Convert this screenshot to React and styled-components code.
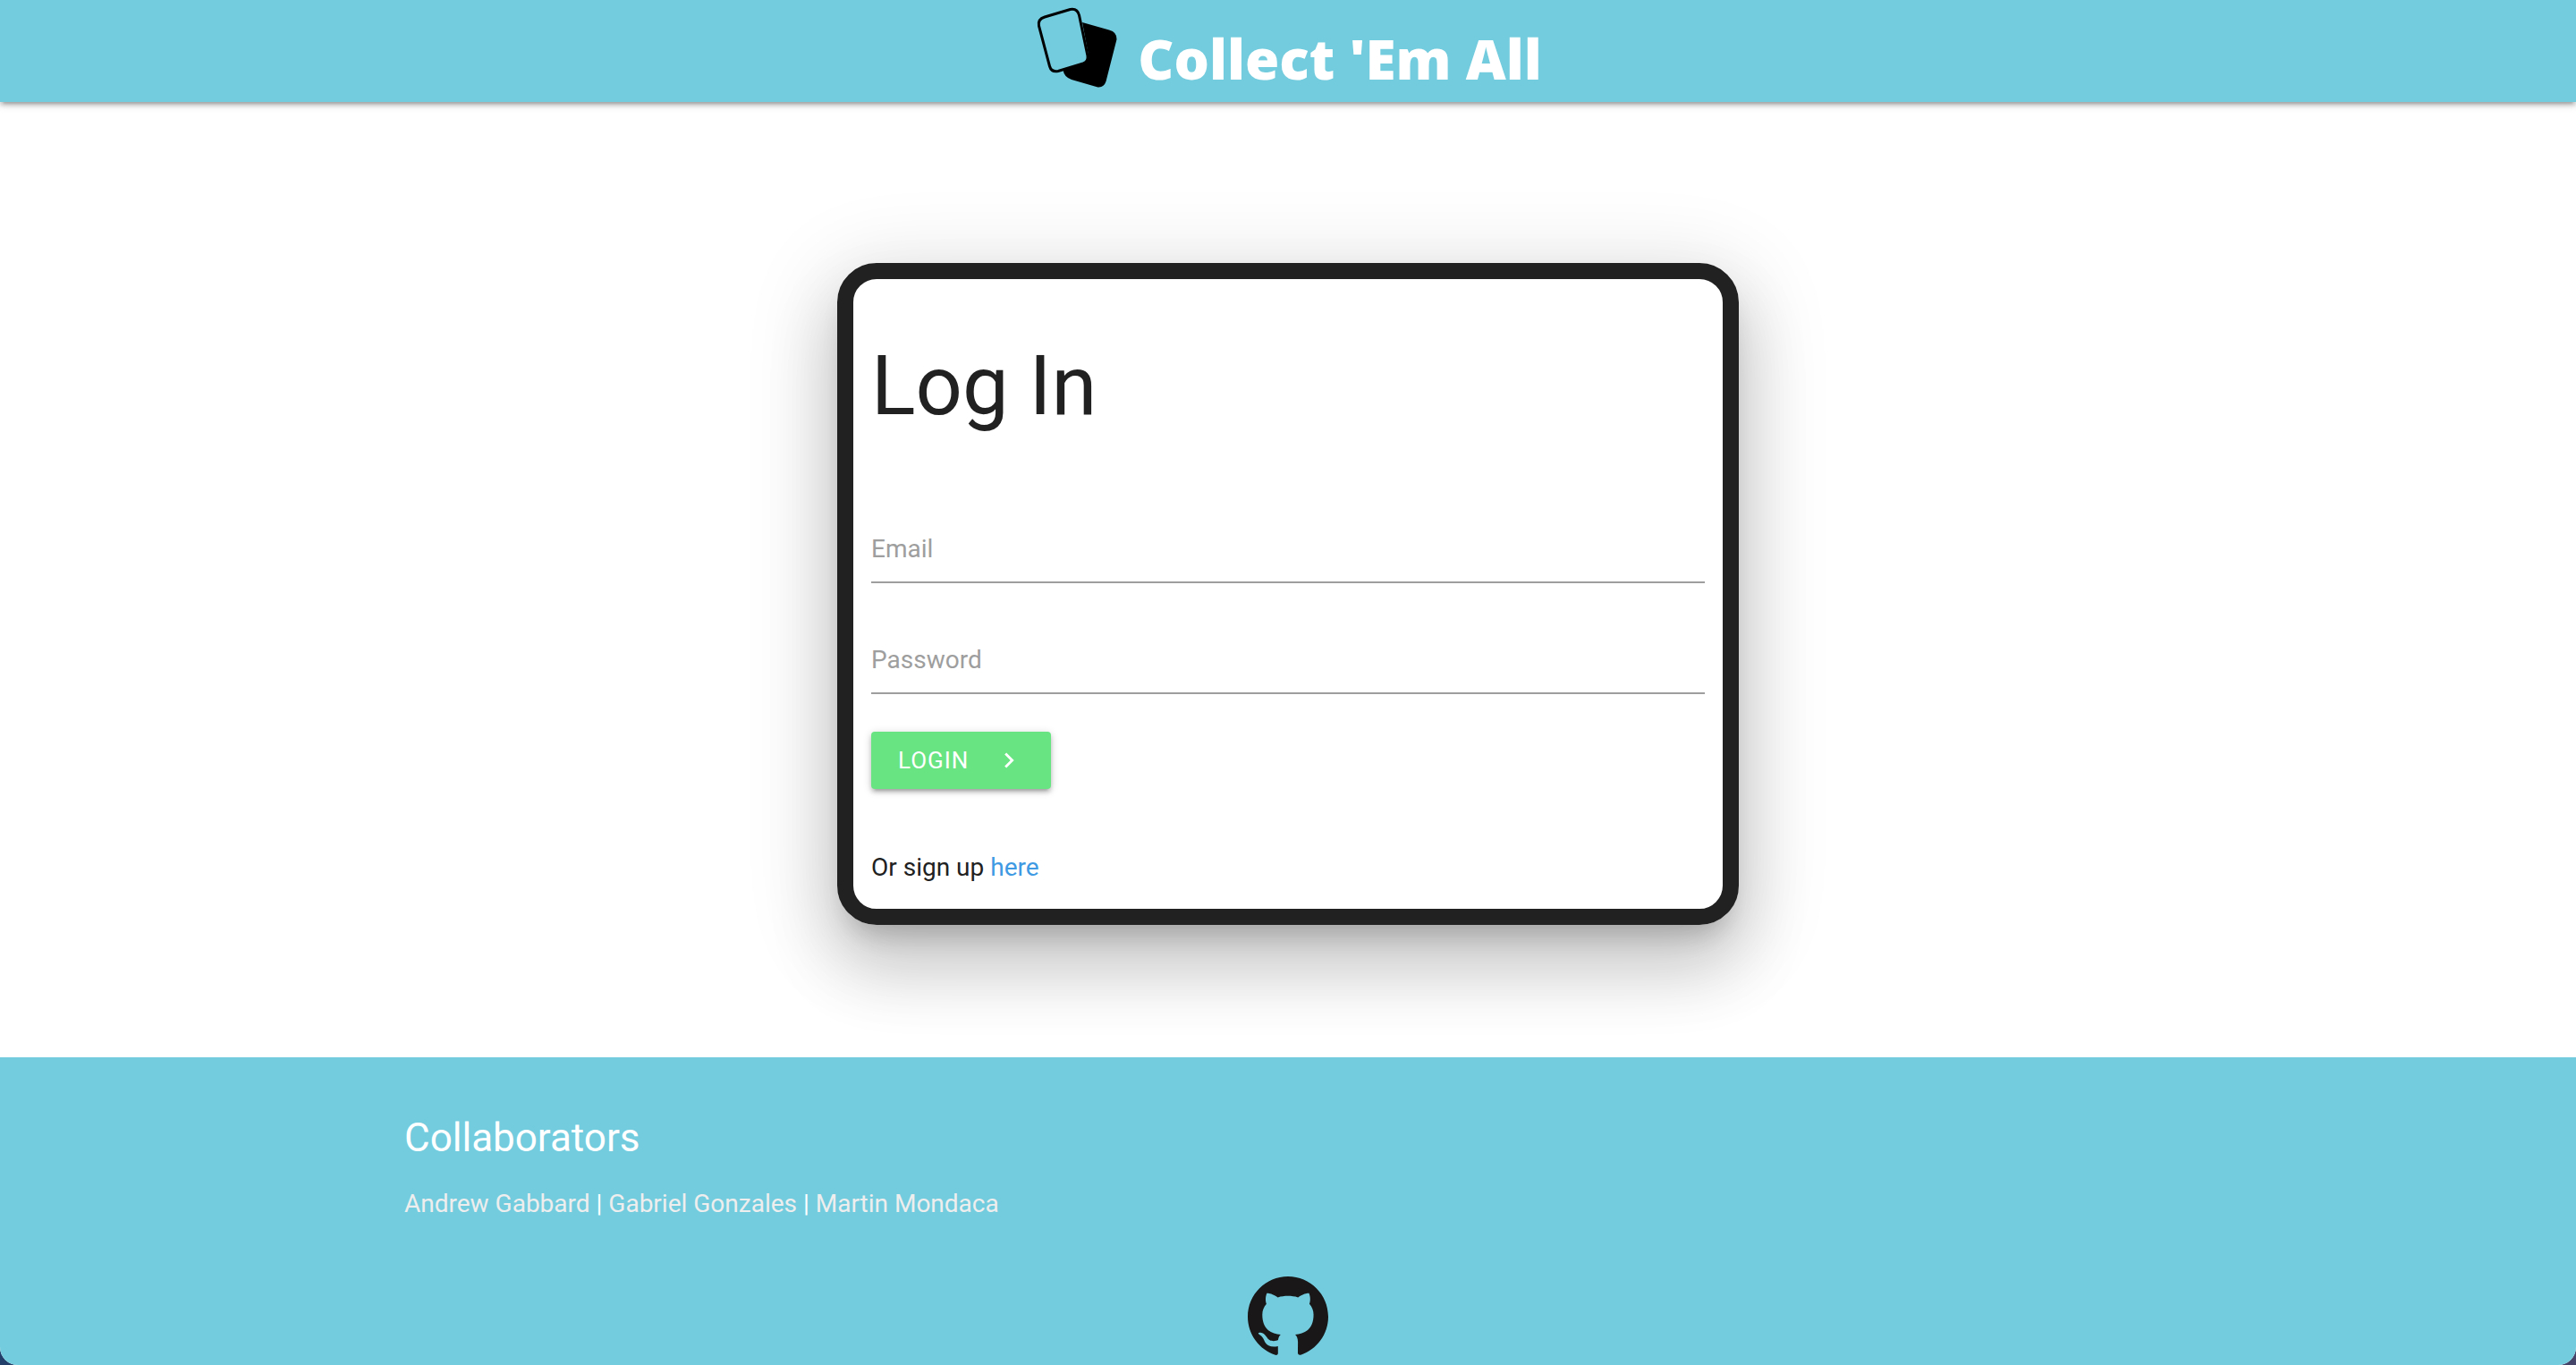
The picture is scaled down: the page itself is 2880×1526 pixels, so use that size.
import React from "react";
import styled, { createGlobalStyle } from "styled-components";

const sans = `Roboto, "Liberation Sans", sans-serif`;
const aqua = "#73ccde";
const ink = "#212121";
const raised = `0 4px 4px 0 rgba(0, 0, 0, 0.14), 0 6px 2px -4px rgba(0, 0, 0, 0.12),
  0 2px 10px 0 rgba(0, 0, 0, 0.2)`;

const GlobalStyle = createGlobalStyle`
  *, *::before, *::after { box-sizing: border-box; }
  body {
    margin: 0;
    background: linear-gradient(90deg, #223f6a, #454469);
    color: ${ink};
    font-family: ${sans};
    font-size: 28px;
    line-height: 44px;
  }
`;

const Page = styled.div`
  display: flex;
  flex-direction: column;
  min-height: 100vh;
  overflow: hidden;
  border-radius: 0 0 20px 20px;
  background: #fff;
`;

const Header = styled.header`
  display: flex;
  justify-content: center;
  align-items: flex-start;
  gap: 20px;
  height: 114px;
  padding-top: 5px;
  background: ${aqua};
  box-shadow: ${raised};
`;

const Brand = styled.h1`
  margin: 0;
  padding-top: 20px;
  color: #fff;
  font-family: "Noto Sans", sans-serif;
  font-size: 62px;
  font-weight: 900;
  line-height: 80px;
`;

const Main = styled.main`
  flex: 1;
  display: flex;
  justify-content: center;
  align-items: flex-start;
  padding: 180px 0 148px;
`;

const Card = styled.section`
  width: 35%;
  padding: 0 20px 24px;
  border: 18px solid ${ink};
  border-radius: 44px;
  box-shadow: 0 48px 76px 6px rgba(0, 0, 0, 0.14), 0 18px 92px 16px rgba(0, 0, 0, 0.12),
    0 22px 30px -14px rgba(0, 0, 0, 0.2);
`;

const Title = styled.h2`
  margin: 0;
  padding: 64px 0 72px;
  font-size: 92px;
  font-weight: 400;
  line-height: 112px;
`;

const Form = styled.form`
  display: flex;
  flex-direction: column;
  align-items: flex-start;
  gap: 32px;
`;

const Field = styled.div`
  display: grid;
  width: 100%;
  > * { grid-area: 1 / 1; }
`;

const Label = styled.label`
  padding-top: 32px;
  color: #9e9e9e;
  pointer-events: none;
`;

const Input = styled.input`
  width: 100%;
  height: 92px;
  padding: 16px 0 0;
  border: 0;
  border-bottom: 2px solid #9e9e9e;
  background: transparent;
  color: ${ink};
  font: inherit;
  outline: 0;
`;

const Button = styled.button`
  display: flex;
  align-items: center;
  gap: 28px;
  height: 64px;
  margin-top: 10px;
  padding: 0 30px;
  border: 0;
  border-radius: 4px;
  background: #69e483;
  box-shadow: ${raised};
  color: #fff;
  font-family: ${sans};
  font-size: 26px;
  letter-spacing: 1px;
  cursor: pointer;
`;

const SignUp = styled.p`
  margin: 66px 0 0;
`;

const SignUpLink = styled.a`
  color: #3f9ae3;
  text-decoration: none;
`;

const Footer = styled.footer`
  display: flex;
  flex-direction: column;
  padding: 60px 0 10px;
  background: ${aqua};
  color: #fff;
`;

const Container = styled.div`
  width: 70%;
  margin: 0 auto;
  padding: 0 20px;
`;

const FooterTitle = styled.h3`
  margin: 0 0 22px;
  font-size: 44px;
  font-weight: 400;
  line-height: 60px;
`;

const People = styled.p`
  margin: 0;
`;

const Person = styled.a`
  color: #eee;
  text-decoration: none;
`;

const RepoLink = styled.a`
  align-self: center;
  display: flex;
  margin-top: 58px;
`;

function CardsLogo() {
  return (
    <svg width="96" height="96" viewBox="0 0 96 96" aria-hidden="true">
      <path d="M54 20L84 28.5Q93 31 92.5 39L80.5 86Q78 93.5 70.5 92.2L42 84Q33.500 81 32.500 73L56 66Q62 63 61 57Z" />
      <path
        d="M12 14L40.500 5.500Q48.500 4 50.500 12L60 57.500Q61 63.500 55 66L27 74.500Q19.500 76 17.500 69L5.500 24Q4 16.500 12 14Z"
        fill={aqua}
        stroke="#000"
        strokeWidth="3"
      />
    </svg>
  );
}

function Chevron() {
  return (
    <svg width="34" height="34" viewBox="0 0 24 24" fill="#fff" aria-hidden="true">
      <path d="M10 6L8.590 7.410 13.170 12l-4.580 4.590L10 18l6-6z" />
    </svg>
  );
}

function GithubMark() {
  return (
    <svg width="90" height="90" viewBox="0 0 24 24" fill="#191717" aria-hidden="true">
      <path d="M12 .297c-6.630 0-12 5.373-12 12 0 5.303 3.438 9.800 8.205 11.385.6.113.82-.258.82-.577 0-.285-.01-1.040-.015-2.040-3.338.724-4.042-1.610-4.042-1.610C4.422 18.070 3.633 17.700 3.633 17.700c-1.087-.744.084-.729.084-.729 1.205.084 1.838 1.236 1.838 1.236 1.070 1.835 2.809 1.305 3.495.998.108-.776.417-1.305.76-1.605-2.665-.3-5.466-1.332-5.466-5.930 0-1.310.465-2.380 1.235-3.220-.135-.303-.54-1.523.105-3.176 0 0 1.005-.322 3.300 1.230.96-.267 1.980-.399 3-.405 1.020.006 2.040.138 3 .405 2.280-1.552 3.285-1.230 3.285-1.230.645 1.653.24 2.873.12 3.176.765.840 1.230 1.910 1.230 3.220 0 4.610-2.805 5.625-5.475 5.920.42.360.81 1.096.81 2.220 0 1.606-.015 2.896-.015 3.286 0 .315.21.690.825.570C20.565 22.092 24 17.592 24 12.297c0-6.627-5.373-12-12-12" />
    </svg>
  );
}

export default function App() {
  return (
    <>
      <GlobalStyle />
      <Page>
        <Header>
          <CardsLogo />
          <Brand>Collect 'Em All</Brand>
        </Header>
        <Main>
          <Card>
            <Title>Log In</Title>
            <Form onSubmit={(event) => event.preventDefault()}>
              <Field>
                <Label htmlFor="email">Email</Label>
                <Input id="email" type="email" />
              </Field>
              <Field>
                <Label htmlFor="password">Password</Label>
                <Input id="password" type="password" />
              </Field>
              <Button type="submit">
                LOGIN
                <Chevron />
              </Button>
            </Form>
            <SignUp>
              Or sign up <SignUpLink href="#signup">here</SignUpLink>
            </SignUp>
          </Card>
        </Main>
        <Footer>
          <Container>
            <FooterTitle>Collaborators</FooterTitle>
            <People>
              <Person href="#andrew">Andrew Gabbard</Person> | <Person href="#gabriel">Gabriel Gonzales</Person> |{" "}
              <Person href="#martin">Martin Mondaca</Person>
            </People>
          </Container>
          <RepoLink href="#repo" aria-label="GitHub repository">
            <GithubMark />
          </RepoLink>
        </Footer>
      </Page>
    </>
  );
}
